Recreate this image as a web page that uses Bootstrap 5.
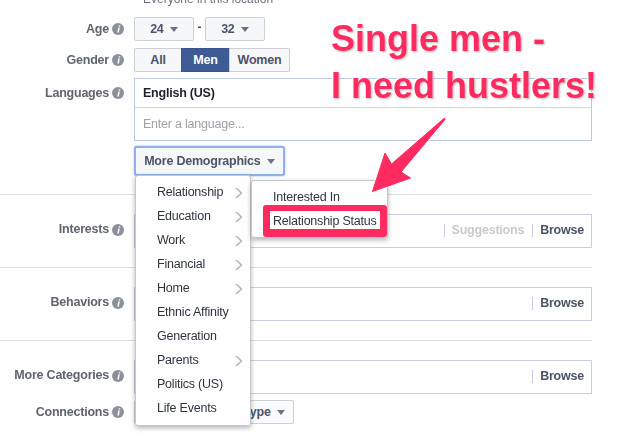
<!DOCTYPE html>
<html lang="en">
<head>
<meta charset="utf-8">
<title>Audience targeting</title>
<link rel="stylesheet" href="https://cdn.jsdelivr.net/npm/bootstrap@5.3.0/dist/css/bootstrap.min.css">
<style>
html,body{margin:0;height:443px;overflow:hidden;background:#fff}
body{font-family:"Liberation Sans",Arial,sans-serif;color:#1d2129}
.stage{position:relative;width:622px;height:443px;overflow:hidden;filter:blur(.4px)}
.form-col{width:592px}
.loc-note{height:6px;padding-left:143px;font-size:12px;line-height:6px;color:#6d7280;margin-bottom:11px;overflow:hidden}
.loc-note span{position:relative;top:-4px}
.frow{display:flex;gap:10px}
.flabel{width:124px;flex:none;display:flex;justify-content:flex-end;align-items:center;gap:3px;font-size:12.5px;letter-spacing:-.22px;font-weight:700;color:#5f646e;white-space:nowrap}
.info{width:12px;height:12px;flex:none}
.fb-btn{font-family:inherit;font-size:12.5px;letter-spacing:-.22px;font-weight:700;color:#4b5468;background:#f6f7f9;border:1px solid #cdd0d6;border-radius:2px;padding:0;height:24px;line-height:22px;white-space:nowrap}
.fb-btn:hover{color:#4b5468;background:#f6f7f9;border-color:#cdd0d6}
.caret{display:inline-block;width:0;height:0;border-left:4.5px solid transparent;border-right:4.5px solid transparent;border-top:5px solid #6a7284;margin-left:3px;vertical-align:1px}
.age-btn{width:60px}
.dash{width:11px;text-align:center;font-size:12px;font-weight:700;color:#4b5468;line-height:20px}
.gender-group{margin-top:7px}
.g-all{width:48px}
.g-men{width:49px}
.g-women{width:61px}
.gender-group .g-men{background:#3f5b96;border-color:#3a5490;color:#fff}
.lang-box{width:458px;height:63px;border:1px solid #bcc9e0;margin-top:6px;background:#fff;font-size:12.5px;letter-spacing:-.22px}
.lang-tag{height:29px;line-height:28px;padding-left:8px;font-weight:700;color:#1d2129;border-bottom:1px solid #cfd6e4}
.lang-input{line-height:32px;padding-left:8px;color:#9da1a8}
.more-btn{width:151px;height:30px;margin:5px 0 0 134px;display:block;border:2px solid #8fb0ec;box-shadow:0 0 2px #8fb0ec;background:#f6f7f9;border-radius:3px;line-height:26px;color:#4b5468}
.rule{height:1px;background:#dcdee2;margin:0}
.browse-box{flex:none;width:458px;height:34px;border:1px solid #c6d0e2;background:#fff;display:flex;align-items:center;justify-content:flex-end;font-size:12.5px;letter-spacing:-.22px;font-weight:700;color:#4b5468;padding:0 7px 2px 0}
.vbar{width:1px;height:13px;background:#c6d0e2;margin-right:7px}
.sugg{color:#c8cacd;margin-right:8px}
.conn-btn{width:160px;height:24px;text-align:right;padding-right:8px;background:#fafbfc}
.fly{position:absolute;z-index:5;display:block;background:#fff;border:1px solid #c5c7cb;border-radius:3px;box-shadow:0 2px 5px rgba(0,0,0,.3);padding:5px 0;margin:0;min-width:0;font-size:12.5px;color:#2f3540}
.menu-main{left:135px;top:175px;width:116px;height:251px}
.menu-sub{left:251px;top:180px;width:137px;height:58px;padding:5px 0}
.fly .dropdown-item{height:24px;line-height:23px;padding:0 0 0 21px;color:#2f3540;position:relative;font-size:12.5px;letter-spacing:-.22px;background:none}
.chev{position:absolute;right:7px;top:6px;width:8px;height:12px}
.hilite{position:absolute;z-index:6;left:263px;top:205px;width:124px;height:32px;border:solid #ff2a60;border-width:6px 7px 8px 7px;border-radius:3px}
.slogan{position:absolute;z-index:7;left:331px;top:15px;margin:0;font-size:36px;line-height:47px;font-weight:700;color:#ff2a60;white-space:nowrap;text-shadow:0 0 2px #fff,1px 1px 2px rgba(130,130,130,.7),-1px -1px 1px #fff}
.arrow{position:absolute;z-index:7;left:0;top:0;width:622px;height:443px;filter:drop-shadow(0 0 1px rgba(255,255,255,.9))}
.lang-label{margin-top:6px;height:30px}
.mt-rule-1{margin-top:18px}
.sect{margin-top:19px}
.sect .flabel{padding-bottom:3px}
.rule-next{margin-top:19px}
.conn-row{margin-top:6px}
</style>
</head>
<body>
<svg width="0" height="0" class="d-block position-absolute"><defs>
<symbol id="i-info" viewBox="0 0 12 12"><circle cx="6" cy="6" r="6" fill="#8b909b"/><path d="M6.900 2.200h1.500l-.3 1.400H6.600zM6.300 4.600h1.500L6.900 9.600H5.300z" fill="#fff"/></symbol>
<symbol id="i-chev" viewBox="0 0 8 12"><path d="M1 1l5.500 5L1 11" fill="none" stroke="#aeb2b8" stroke-width="1.400"/></symbol>
</defs></svg>
<div class="stage">
  <div class="form-col">
    <div class="loc-note"><span>Everyone in this location</span></div>
    <div class="frow">
      <div class="flabel">Age <svg class="info"><use href="#i-info"/></svg></div>
      <div class="d-flex">
        <button class="btn fb-btn age-btn" type="button">24 <span class="caret"></span></button>
        <div class="dash">-</div>
        <button class="btn fb-btn age-btn" type="button">32 <span class="caret"></span></button>
      </div>
    </div>
    <div class="frow gender-group">
      <div class="flabel">Gender <svg class="info"><use href="#i-info"/></svg></div>
      <div class="btn-group">
        <button class="btn fb-btn g-all" type="button">All</button>
        <button class="btn fb-btn g-men" type="button">Men</button>
        <button class="btn fb-btn g-women" type="button">Women</button>
      </div>
    </div>
    <div class="frow">
      <div class="flabel lang-label">Languages <svg class="info"><use href="#i-info"/></svg></div>
      <div class="lang-box">
        <div class="lang-tag">English (US)</div>
        <div class="lang-input">Enter a language...</div>
      </div>
    </div>
    <button class="btn fb-btn more-btn" type="button">More Demographics <span class="caret"></span></button>
    <div class="rule mt-rule-1"></div>
    <div class="frow sect">
      <div class="flabel">Interests <svg class="info"><use href="#i-info"/></svg></div>
      <div class="browse-box"><span class="vbar"></span><span class="sugg">Suggestions</span><span class="vbar"></span>Browse</div>
    </div>
    <div class="rule rule-next"></div>
    <div class="frow sect">
      <div class="flabel">Behaviors <svg class="info"><use href="#i-info"/></svg></div>
      <div class="browse-box"><span class="vbar"></span>Browse</div>
    </div>
    <div class="rule rule-next"></div>
    <div class="frow sect">
      <div class="flabel">More Categories <svg class="info"><use href="#i-info"/></svg></div>
      <div class="browse-box"><span class="vbar"></span>Browse</div>
    </div>
    <div class="frow conn-row">
      <div class="flabel">Connections <svg class="info"><use href="#i-info"/></svg></div>
      <button class="btn fb-btn conn-btn" type="button">Connection type <span class="caret"></span></button>
    </div>
  </div>

  <ul class="dropdown-menu fly menu-main list-unstyled">
    <li><a class="dropdown-item" href="#">Relationship<svg class="chev"><use href="#i-chev"/></svg></a></li>
    <li><a class="dropdown-item" href="#">Education<svg class="chev"><use href="#i-chev"/></svg></a></li>
    <li><a class="dropdown-item" href="#">Work<svg class="chev"><use href="#i-chev"/></svg></a></li>
    <li><a class="dropdown-item" href="#">Financial<svg class="chev"><use href="#i-chev"/></svg></a></li>
    <li><a class="dropdown-item" href="#">Home<svg class="chev"><use href="#i-chev"/></svg></a></li>
    <li><a class="dropdown-item" href="#">Ethnic Affinity</a></li>
    <li><a class="dropdown-item" href="#">Generation</a></li>
    <li><a class="dropdown-item" href="#">Parents<svg class="chev"><use href="#i-chev"/></svg></a></li>
    <li><a class="dropdown-item" href="#">Politics (US)</a></li>
    <li><a class="dropdown-item" href="#">Life Events</a></li>
  </ul>
  <ul class="dropdown-menu fly menu-sub list-unstyled">
    <li><a class="dropdown-item" href="#">Interested In</a></li>
    <li><a class="dropdown-item" href="#">Relationship Status</a></li>
  </ul>
  <div class="hilite"></div>

  <p class="slogan">Single men -<br>I need hustlers!</p>
  <svg class="arrow" viewBox="0 0 622 443"><path d="M444.500 118 L391.500 164 L385 153 L372.500 191.500 L410.500 178 L401 172 L445 119.500 Z" fill="#ff2a60" stroke="#ff2a60" stroke-width="1" stroke-linejoin="round"/></svg>
</div>
<script src="https://cdn.jsdelivr.net/npm/bootstrap@5.3.0/dist/js/bootstrap.bundle.min.js"></script>
</body>
</html>
